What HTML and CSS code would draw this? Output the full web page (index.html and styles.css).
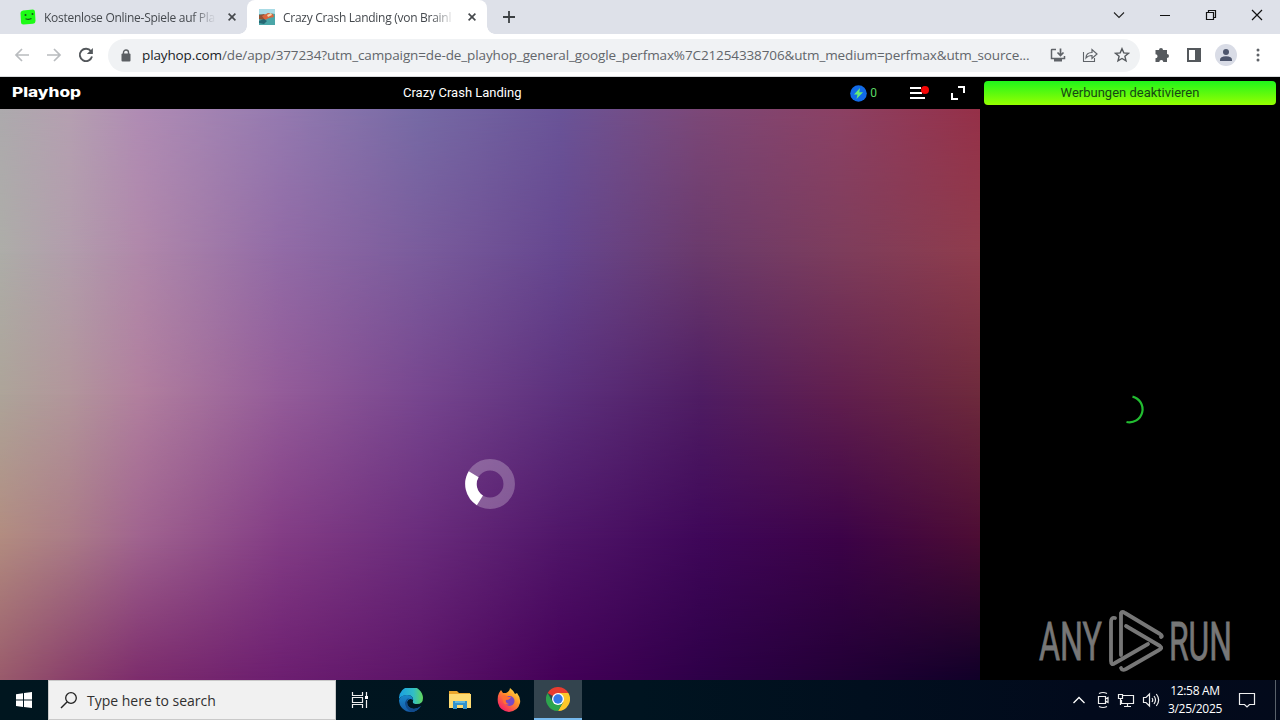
FILE: index.html
```html
<!DOCTYPE html>
<html lang="de">
<head>
    <meta charset="UTF-8">
    <meta name="viewport" content="width=device-width, initial-scale=1.0">
    <title>Crazy Crash Landing</title>
    <link rel="stylesheet" href="styles.css">
</head>
<body>
    <div class="desktop">
        <!-- Tab strip -->
        <div class="tab-strip">
            <div class="tab">
                <svg class="favicon" width="16" height="16" viewBox="0 0 16 16">
                    <path d="M3 1.5 13 .5Q15 .5 15 3L15.5 12Q15.5 14.500 13 14.700L3.500 15.500Q1 15.500 1 13L.5 4Q.5 2 3 1.500Z" fill="#1dfb16"/>
                    <circle cx="5.500" cy="6" r="1" fill="#174b1c"/><circle cx="12.500" cy="5" r="1" fill="#174b1c"/>
                    <path d="M5.500 9.800Q9 11 11.500 9.600" fill="none" stroke="#174b1c" stroke-width="1.200"/>
                </svg>
                <span class="tab-title">Kostenlose Online-Spiele auf Pla</span>
                <svg class="tab-close" width="8" height="8" viewBox="0 0 8 8"><path d="M.6.6 7.400 7.400M7.400.6.6 7.400" stroke="#45484c" stroke-width="1.600"/></svg>
            </div>
            <div class="tab active">
                <svg class="favicon" width="16" height="16" viewBox="0 0 16 16">
                    <rect width="16" height="16" fill="#4aa6a8"/>
                    <path d="M0 0H16V5L10 4 6 6 0 5Z" fill="#a9dbe5"/>
                    <path d="M0 6 5 5 9 8 5 11 0 10Z" fill="#935334"/>
                    <path d="M3 7 9 4 14 5 15 8 10 9 6 11Z" fill="#d9653b"/>
                    <path d="M0 12 5 10 8 12 5 15 0 14Z" fill="#266874"/>
                    <path d="M8 6 12 4 13 6 9 8Z" fill="#f2d7ad"/>
                </svg>
                <span class="tab-title">Crazy Crash Landing (von Brainl</span>
                <svg class="tab-close" width="8" height="8" viewBox="0 0 8 8"><path d="M.6.6 7.400 7.400M7.400.6.6 7.400" stroke="#45484c" stroke-width="1.600"/></svg>
            </div>
            <svg class="new-tab" width="12" height="12" viewBox="0 0 12 12"><path d="M6 0V12M0 6H12" stroke="#3c4043" stroke-width="1.800"/></svg>
            <div class="window-buttons">
                <svg width="12" height="12" viewBox="0 0 12 12"><path d="M1 3.500 6 8.500 11 3.500" fill="none" stroke="#222" stroke-width="1.100"/></svg>
                <svg width="12" height="12" viewBox="0 0 12 12"><path d="M1 6.500H11" stroke="#111"/></svg>
                <svg width="12" height="12" viewBox="0 0 12 12"><path d="M1.500 3.500H8.500V10.500H1.500ZM3.500 3.500V1.500H10.500V8.500H8.500" fill="none" stroke="#111" stroke-width="1.200"/></svg>
                <svg width="12" height="12" viewBox="0 0 12 12"><path d="M1 1 11 11M11 1 1 11" stroke="#111" stroke-width="1.200"/></svg>
            </div>
        </div>

        <!-- Toolbar -->
        <div class="toolbar">
            <div class="nav-buttons">
                <svg width="16" height="16" viewBox="0 0 16 16"><path d="M15 8H2M8 2 2 8 8 14" fill="none" stroke="#b9bcbf" stroke-width="1.700"/></svg>
                <svg width="16" height="16" viewBox="0 0 16 16"><path d="M1 8H14M8 2 14 8 8 14" fill="none" stroke="#b9bcbf" stroke-width="1.700"/></svg>
                <svg width="16" height="16" viewBox="0 0 16 16"><path d="M13 4.200A6.200 6.200 0 1 0 14 9.600" fill="none" stroke="#53575b" stroke-width="1.900"/><path d="M14.900 1V7H8.900Z" fill="#53575b"/></svg>
            </div>
            <div class="address-bar">
                <svg class="lock" width="10" height="13" viewBox="0 0 10 13"><rect x=".5" y="4.500" width="9" height="8" rx="1" fill="#5b5f63"/><path d="M2.500 5V3.300A2.500 2.300 0 0 1 7.500 3.300V5" fill="none" stroke="#5b5f63" stroke-width="1.400"/></svg>
                <span class="url"><b>playhop.com</b>/de/app/377234?utm_campaign=de-de_playhop_general_google_perfmax%7C21254338706&amp;utm_medium=perfmax&amp;utm_source...</span>
                <div class="address-icons">
                    <svg width="16" height="16" viewBox="0 0 16 16"><path d="M6 2.500H2Q1.500 2.500 1.500 3V11.500H14.500V9" fill="none" stroke="#5f6368" stroke-width="1.500"/><path d="M4 12H12V14.500H4Z" fill="#5f6368"/><path d="M10.500 1.500V8M7.500 5.500 10.500 8.500 13.500 5.500" fill="none" stroke="#5f6368" stroke-width="1.700"/></svg>
                    <svg width="16" height="16" viewBox="0 0 16 16"><path d="M1.500 5V14.500H12.500V11" fill="none" stroke="#5f6368" stroke-width="1.100"/><path d="M4 11Q4 5.500 10 5.500V2.500L15 7 10 11.500V8.500Q6 8.500 4 11Z" fill="none" stroke="#5f6368" stroke-width="1.200"/></svg>
                    <svg width="16" height="16" viewBox="0 0 16 16"><path d="M8 1.700 9.800 5.900 14.500 6.300 10.900 9.300 12 13.900 8 11.500 4 13.900 5.100 9.300 1.500 6.300 6.200 5.900Z" fill="none" stroke="#54585c" stroke-width="1.400"/></svg>
                </div>
            </div>
            <div class="toolbar-icons">
                <svg width="16" height="16" viewBox="0 0 16 16"><path d="M5 3A2 2 0 0 1 9 3H13V7A2 2 0 0 1 13 11V15H9.300A2 2 0 0 0 5.300 15H1.500V11.300A2 2 0 0 0 1.500 7.200V3Z" fill="#565a5e"/></svg>
                <svg width="16" height="16" viewBox="0 0 16 16"><path fill-rule="evenodd" d="M1 1H15V15H1ZM3 3V13H9V3Z" fill="#54585c"/></svg>
                <svg width="22" height="22" viewBox="0 0 22 22"><circle cx="11" cy="11" r="11" fill="#d9dce6"/><circle cx="11" cy="8" r="3" fill="#4d556c"/><path d="M5 16Q5 12.300 11 12.300T17 16V17H5Z" fill="#4d556c"/></svg>
                <svg width="4" height="14" viewBox="0 0 4 14"><g fill="#5f6368"><circle cx="2" cy="2" r="1.500"/><circle cx="2" cy="7" r="1.500"/><circle cx="2" cy="12" r="1.500"/></g></svg>
            </div>
        </div>

        <!-- Page -->
        <div class="page">
            <div class="game">
                <div class="game-header">
                    <svg class="logo" width="72" height="18" viewBox="0 0 72 18"><text x="0" y="13" textLength="69" lengthAdjust="spacingAndGlyphs">Playhop</text></svg>
                    <span class="game-title">Crazy Crash Landing</span>
                    <div class="game-tools">
                        <svg width="17" height="17" viewBox="0 0 17 17"><circle cx="8.500" cy="8.500" r="8.300" fill="#126be8"/><path d="M10 3 4 9.500H7.500L6.500 14 13 7.300H9.300Z" fill="#67ed75"/></svg>
                        <span class="coins">0</span>
                        <svg class="menu-icon" width="20" height="16" viewBox="0 0 20 16"><path d="M1 3H12M1 8H13M1 13H16" stroke="#fff" stroke-width="2"/><circle cx="16" cy="5" r="4" fill="#f50505"/></svg>
                        <svg class="expand-icon" width="16" height="16" viewBox="0 0 16 16"><path d="M8 2H14V8M2 8V14H8" fill="none" stroke="#fff" stroke-width="2"/></svg>
                    </div>
                </div>
                <div class="stage">
                    <div class="shade shade-1"></div>
                    <div class="shade shade-2"></div>
                    <div class="shade shade-3"></div>
                    <div class="shade shade-4"></div>
                    <svg class="spinner" width="50" height="50" viewBox="0 0 50 50">
                        <circle cx="25" cy="25" r="19.200" fill="none" stroke="#fff" stroke-opacity=".25" stroke-width="11.500"/>
                        <path d="M14.900 41.300A19.200 19.200 0 0 1 8.700 15.200" fill="none" stroke="#fff" stroke-width="11.500"/>
                    </svg>
                </div>
            </div>
            <div class="sidebar">
                <button class="ads-button">Werbungen deaktivieren</button>
                <svg class="ad-spinner" width="30" height="30" viewBox="0 0 30 30"><path d="M17.500 1.600A13 13 0 0 1 11.500 27" fill="none" stroke="#22bd31" stroke-width="2.200"/></svg>
                <svg class="watermark" width="204" height="64" viewBox="0 0 204 64">
                    <g class="watermark-text">
                        <text x="1" y="51" textLength="63" lengthAdjust="spacingAndGlyphs">ANY</text>
                        <text x="131" y="51" textLength="63" lengthAdjust="spacingAndGlyphs">RUN</text>
                    </g>
                    <g fill="none" stroke="#777" stroke-width="3.800" stroke-linejoin="round" stroke-linecap="round">
                        <path d="M83 46V4Q84 2 87 4L122 25Q125 27 123 28"/>
                        <path d="M77 9Q73 8 73 13V52Q73 57 77 54L110 35"/>
                        <path d="M88 17 122 37Q125 39 121 41L88 60Q84 62 83 59"/>
                    </g>
                </svg>
            </div>
        </div>

        <!-- Taskbar -->
        <div class="taskbar">
            <div class="start"><svg width="16" height="16" viewBox="0 0 16 16"><path d="M0 2.200 7 1.200V7.500H0ZM8 1 16 0V7.500H8ZM0 8.500H7V14.900L0 13.900ZM8 8.500H16V16L8 15Z" fill="#fff"/></svg></div>
            <div class="search">
                <svg width="18" height="18" viewBox="0 0 18 18"><circle cx="11" cy="7" r="5.300" fill="none" stroke="#222" stroke-width="1.300"/><path d="M7 11 1 17" stroke="#222" stroke-width="1.400"/></svg>
                <span>Type here to search</span>
            </div>
            <div class="task-item"><svg width="18" height="18" viewBox="0 0 18 18"><path d="M1.500 1V4.500H11.500V1M1.500 17V13.500H11.500V17M1.500 6.500H11.500V11.500H1.500ZM15.500 1V5M15.500 9V17" fill="none" stroke="#eee" stroke-width="1.200"/><rect x="14" y="5" width="3" height="3" fill="#fff"/></svg></div>
            <div class="task-item"><svg width="24" height="24" viewBox="0 0 24 24">
                <defs>
                    <linearGradient id="edgeTop" x2="1"><stop stop-color="#199fe2"/><stop offset=".6" stop-color="#32bec6"/><stop offset="1" stop-color="#62d65a"/></linearGradient>
                    <linearGradient id="edgeLow" y2="1" x2="0"><stop stop-color="#1989cc"/><stop offset="1" stop-color="#1459a5"/></linearGradient>
                </defs>
                <path d="M0 11A12 12 0 0 1 24 10Q24 16 18 16 13 16 14 13 15 8 9 7 3 7 0 11Z" fill="url(#edgeTop)"/>
                <path d="M0 12Q2 7 8 7 14 7 14 12 10 9 8 14 8 20 15 21 19 21 22 18 18 24 12 24A12 12 0 0 1 0 12Z" fill="url(#edgeLow)"/>
                <path d="M10 10Q6 14 10 19 15 23 22 18 18 24 12 24 6 20 6 15 7 11 10 10Z" fill="#114a8b"/>
            </svg></div>
            <div class="task-item"><svg width="22" height="20" viewBox="0 0 22 20"><path d="M0 1H8L10 3H21V18H0Z" fill="#eba72d"/><path d="M0 4H22V18H0Z" fill="#fedb72"/><path d="M4 11H18V19H14V15H8V19H4Z" fill="#3293ce"/><path d="M6 11H16V13H6Z" fill="#62b9e1"/></svg></div>
            <div class="task-item"><svg width="24" height="24" viewBox="0 0 24 24">
                <defs><linearGradient id="fox" x1="1" x2=".2" y2="1"><stop stop-color="#fff44f"/><stop offset=".45" stop-color="#ff9328"/><stop offset="1" stop-color="#f5156c"/></linearGradient></defs>
                <path d="M2 5 4 2 6 5 9 5Q13 3 13 0 17 3 18 6L20 5Q24 10 23 15 21 23 12 24 3 23 1 15 0 9 2 5Z" fill="url(#fox)"/>
                <circle cx="12.500" cy="13" r="5" fill="#7849c4"/>
                <path d="M5 8Q9 6 11 9L14 9Q13 12 9 12 8 15 12 16 7 18 6 13Z" fill="#ff7032"/>
            </svg></div>
            <div class="task-item current"><svg width="24" height="24" viewBox="0 0 24 24">
                <path d="M12 12 1.600 6A12 12 0 0 1 22.400 6Z" fill="#e83c30"/>
                <path d="M12 12V6H22.400A12 12 0 0 1 12 24L17.200 15Z" fill="#fbc72a"/>
                <path d="M12 12 17.200 15 12 24A12 12 0 0 1 1.600 6L6.800 15Z" fill="#2da44d"/>
                <circle cx="12" cy="12" r="6" fill="#fff"/><circle cx="12" cy="12" r="4.700" fill="#3479e8"/>
            </svg></div>
            <div class="tray">
                <svg width="14" height="14" viewBox="0 0 14 14"><path d="M1.500 10 7 4.500 12.500 10" fill="none" stroke="#fff" stroke-width="1.300"/></svg>
                <svg width="14" height="18" viewBox="0 0 14 18"><path d="M2.500 5.500H9.500V12.500H2.500ZM9.500 8 12 6.500V11.500L9.500 10M3 2.500Q7 .5 11 2.500M3 15.500Q7 17.500 11 15.500" fill="none" stroke="#eee" stroke-width="1.200"/></svg>
                <svg width="18" height="16" viewBox="0 0 18 16"><path d="M6 3.500H16.500V11.500H4.500V8M10.500 11.500V14.500M7 14.500H14M1.500 2.500H5.500V6.500H1.500ZM3.500 6.500V13" fill="none" stroke="#eee" stroke-width="1.200"/></svg>
                <svg width="18" height="16" viewBox="0 0 18 16"><path d="M1.500 5.500H4L7.500 2V14L4 10.500H1.500ZM10 6Q11.500 8 10 10M12 4Q15 8 12 12M14.300 2Q19 8 14.300 14" fill="none" stroke="#eee" stroke-width="1.200"/></svg>
            </div>
            <div class="clock"><span>12:58 AM</span><span>3/25/2025</span></div>
            <svg class="notice" width="18" height="18" viewBox="0 0 18 18"><path d="M1.500 2.500H16.500V13.500H11.500L9 16 6.500 13.500H1.500Z" fill="none" stroke="#eee" stroke-width="1.200"/></svg>
            <div class="show-desktop"></div>
        </div>
    </div>
</body>
</html>
```
FILE: styles.css
```css
* {
    box-sizing: border-box;
}

body {
    margin: 0;
    font-family: "Open Sans", "Noto Sans", sans-serif;
    background-color: #000;
}

svg {
    display: block;
    flex-shrink: 0;
}

.desktop {
    width: 1280px;
    height: 720px;
    display: flex;
    flex-direction: column;
    overflow: hidden;
}

/* Tab strip */
.tab-strip {
    height: 34px;
    display: flex;
    align-items: center;
    background-color: #dee1e9;
}

.tab {
    width: 247px;
    height: 34px;
    padding: 0 11px 0 20px;
    display: flex;
    align-items: center;
    font-size: 12px;
    letter-spacing: -0.28px;
    color: #45494e;
}

.tab.active {
    position: relative;
    width: 240px;
    padding-left: 12px;
    background-color: #fff;
    border-radius: 8px 8px 0 0;
}

.tab.active::before,
.tab.active::after {
    content: "";
    position: absolute;
    bottom: 0;
    width: 8px;
    height: 8px;
}

.tab.active::before {
    left: -8px;
    background: radial-gradient(circle at 0 0, transparent 7.5px, #fff 8px);
}

.tab.active::after {
    right: -8px;
    background: radial-gradient(circle at 100% 0, transparent 7.5px, #fff 8px);
}

.tab-title {
    width: 172px;
    margin-left: 8px;
    white-space: nowrap;
    -webkit-mask-image: linear-gradient(to right, #000 148px, transparent 172px);
    mask-image: linear-gradient(to right, #000 148px, transparent 172px);
}

.tab-close {
    margin-left: auto;
}

.new-tab {
    margin-left: 16px;
}

.window-buttons {
    margin: -5px 17px 0 auto;
    display: flex;
    gap: 34px;
}

/* Toolbar */
.toolbar {
    height: 43px;
    padding-right: 20px;
    display: flex;
    align-items: center;
    background-color: #fff;
    border-bottom: 1px solid #d9dcde;
}

.nav-buttons {
    width: 108px;
    padding-left: 14px;
    display: flex;
    gap: 16px;
}

.address-bar {
    width: 1032px;
    height: 33px;
    padding: 0 10px 0 13px;
    display: flex;
    align-items: center;
    background-color: #f0f2f4;
    border-radius: 17px;
}

.url {
    margin-left: 11px;
    white-space: nowrap;
    font-size: 13.5px;
    letter-spacing: -0.12px;
    color: #62666b;
}

.url b {
    font-weight: normal;
    color: #202327;
}

.address-icons {
    margin-left: auto;
    display: flex;
    gap: 16px;
}

.toolbar-icons {
    margin-left: auto;
    display: flex;
    align-items: center;
    gap: 16px;
}

.toolbar-icons svg:nth-child(3) {
    margin: 0 3px 0 -3px;
}

/* Page */
.page {
    height: 603px;
    display: flex;
}

.game {
    width: 980px;
}

.game-header {
    height: 32px;
    padding: 0 14px 0 12px;
    display: grid;
    grid-template-columns: 391px auto 1fr;
    align-items: center;
    background-color: #000;
    color: #fff;
    font-family: Roboto, sans-serif;
    font-size: 13px;
}

.logo text {
    font-family: Inter, sans-serif;
    font-size: 13px;
    font-weight: 800;
    fill: #fff;
}

.game-title {
    padding-bottom: 1px;
}

.game-tools {
    display: flex;
    justify-content: flex-end;
    align-items: center;
}

.coins {
    margin-left: 3px;
    color: #5bd765;
    font-size: 12px;
}

.menu-icon {
    margin-left: 32px;
}

.expand-icon {
    margin-left: 21px;
}

/* Backdrop: rows of horizontal colour ramps, each fading into the next */
.stage {
    position: relative;
    height: 571px;
    background: linear-gradient(to right, #adaaad, #b5a0b1 7%, #b08cb4 14.3%, #957ab0, #766aa5, #6a5498, #7c4878, #8c4164, #963048);
}

.shade {
    position: absolute;
    inset: 0;
}

.shade-1 {
    background: linear-gradient(to right, #adada8, #b29dac 7%, #b088aa 14.3%, #926ba6, #7a5c9c, #66478f, #6a3a6c, #7d3d5c, #8f3c4c);
    mask-image: linear-gradient(transparent 0, #000 25%);
}

.shade-2 {
    background: linear-gradient(to right, #ada499, #b2969b 7%, #b17f9e 14.3%, #945c99, #77468f, #5d317d, #4f1d63, #611f4e, #6e2a3c);
    mask-image: linear-gradient(transparent 25%, #000 50%);
}

.shade-3 {
    background: linear-gradient(to right, #b28c80, #ab7c87 7%, #a0638f 14.3%, #833d85, #6a2c7c, #501669, #3f0759, #3c0348, #4d0d34);
    mask-image: linear-gradient(transparent 50%, #000 75%);
}

.shade-4 {
    background: linear-gradient(to right, #995a6b, #8a406b 7%, #7c2c6c 14.3%, #6c1e70, #5c1468, #440058, #2e0048, #220036, #100028);
    mask-image: linear-gradient(transparent 75%, #000 100%);
}

.spinner {
    position: absolute;
    left: 465px;
    top: 350px;
}

.sidebar {
    width: 300px;
    padding: 4px 4px 0;
    display: flex;
    flex-direction: column;
    background-color: #000;
}

.ads-button {
    height: 24px;
    padding: 0 0 1px;
    border: 0;
    border-radius: 4px;
    background: linear-gradient(#20f51c, #96ff00);
    color: #174713;
    font-family: Roboto, sans-serif;
    font-size: 13px;
}

.ad-spinner {
    margin: 290px 0 0 131px;
}

.watermark {
    margin: 184px 0 0 54px;
}

.watermark-text {
    font-family: Roboto, sans-serif;
    font-size: 53px;
    fill: #777;
    stroke: #777;
    stroke-width: 0.8px;
}

/* Taskbar */
.taskbar {
    height: 40px;
    display: flex;
    align-items: center;
    background: linear-gradient(to right, #00161f, #001420 50%, #020a1c 85%, #030a1b);
    color: #fff;
}

.start {
    width: 48px;
    padding-left: 16px;
}

.search {
    width: 288px;
    height: 40px;
    padding-left: 11px;
    display: flex;
    align-items: center;
    gap: 9px;
    background-color: #f1f1f1;
    border: 1px solid #c9c9c9;
    color: #303030;
    font-size: 14px;
}

.task-item {
    width: 49px;
    height: 40px;
    display: flex;
    align-items: center;
    justify-content: center;
}

.task-item:nth-child(3) {
    width: 50px;
    padding-right: 2px;
}

.task-item.current {
    width: 48px;
    margin-left: 1px;
    background-color: #33444e;
    border-bottom: 2px solid #76b9ed;
}

.tray {
    margin-left: auto;
    display: flex;
    align-items: center;
    gap: 7px;
}

.tray svg:first-child {
    margin-right: 3px;
}

.clock {
    width: 70px;
    display: flex;
    flex-direction: column;
    align-items: center;
    line-height: 18px;
    font-size: 12px;
    letter-spacing: -0.3px;
}

.notice {
    margin-left: 8px;
}

.show-desktop {
    width: 5px;
    height: 40px;
    margin-left: 19px;
    border-left: 1px solid #59616b;
}
```
